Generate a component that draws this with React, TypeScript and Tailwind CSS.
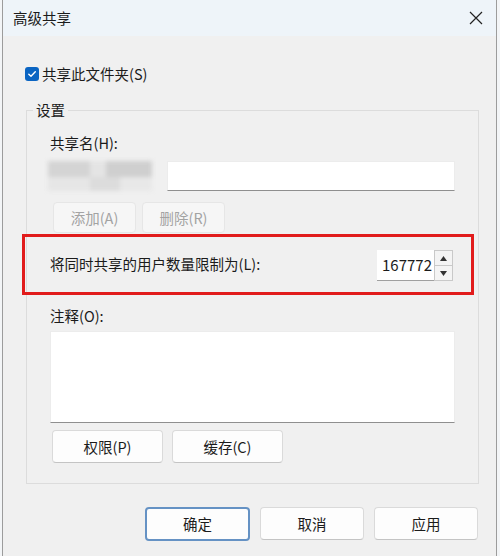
import React from 'react'

const font = { fontFamily: '"Noto Sans CJK SC", "Noto Sans", sans-serif' }

function Btn({ label, w, disabled, primary }: { label: string; w: string; disabled?: boolean; primary?: boolean }) {
  if (disabled) {
    return (
      <div className={`${w} h-[31px] flex items-center justify-center rounded-[4px] border border-[#e6e6e6] bg-[#f6f6f6] text-[#a3a3a3]`}>
        {label}
      </div>
    )
  }
  if (primary) {
    return (
      <div className={`${w} h-[34px] flex items-center justify-center rounded-[4px] border-2 border-[#6592c4] bg-[#fdfdfd] text-[#1b1b1b]`}>
        {label}
      </div>
    )
  }
  return (
    <div className={`${w} h-[33px] flex items-center justify-center rounded-[4px] border border-[#dadada] border-b-[#c4c4c4] bg-[#fdfdfd] text-[#1b1b1b]`}>
      {label}
    </div>
  )
}

function Blurred() {
  return (
    <div className="w-[104px] h-[30px] flex flex-col blur-[2px]">
      <div className="flex h-[16px]">
        <div className="w-[42px] bg-[#d4d4d4]" />
        <div className="w-[16px] bg-[#e4e4e4]" />
        <div className="w-[46px] bg-[#cfcfcf]" />
      </div>
      <div className="flex h-[14px]">
        <div className="w-[42px] bg-[#e6e6e6]" />
        <div className="w-[30px] bg-[#dcdcdc]" />
        <div className="w-[32px] bg-[#e8e8e8]" />
      </div>
    </div>
  )
}

export default function App() {
  return (
    <div className="w-[500px] h-[556px] bg-[#f3f5f7] overflow-hidden text-[14.5px] text-[#1b1b1b]" style={font}>
      <div className="ml-[2px] w-[495px] h-[556px] border-x border-[#9c9c9c] bg-[#f0f0f0] flex flex-col">
        {/* title bar */}
        <div className="h-[36px] bg-[#eef4f9] flex items-center justify-between pl-[10px] pr-[12px]">
          <span className="text-[14.5px]">高级共享</span>
          <svg width="14" height="14" viewBox="0 0 14 14" className="mr-[1px]">
            <path d="M1 1 L13 13 M13 1 L1 13" stroke="#222" strokeWidth="1.2" fill="none" />
          </svg>
        </div>

        <div className="flex flex-col items-start pl-[22px]">
          {/* share checkbox */}
          <div className="flex items-center gap-[3px] mt-[30px] h-[16px]">
            <div className="w-[14px] h-[14px] rounded-[3px] bg-[#0a64c2] flex items-center justify-center">
              <svg width="10" height="10" viewBox="0 0 10 10">
                <path d="M1.8 5.2 L4 7.3 L8.3 2.8" stroke="#fff" strokeWidth="1.4" fill="none" strokeLinecap="round" strokeLinejoin="round" />
              </svg>
            </div>
            <span>共享此文件夹(S)</span>
          </div>

          {/* settings group */}
          <div className="relative mt-[28px] ml-[1px] w-[453px] border border-[#dcdcdc] pl-[23px] pr-[23px] pb-[20px]">
            <span className="absolute -top-[11px] left-[6px] px-[3px] leading-[20px] bg-[#f0f0f0]">设置</span>

            <div className="mt-[22px] leading-[20px]">共享名(H):</div>

            <div className="mt-[8px] flex items-center">
              <div className="-ml-[2px]">
                <Blurred />
              </div>
              <div className="ml-[15px] w-[288px] h-[30px] bg-white border border-[#ececec] border-b-[#8f8f8f]" />
            </div>

            <div className="mt-[11px] flex gap-[6px] ml-[3px]">
              <Btn label="添加(A)" w="w-[83px]" disabled />
              <Btn label="删除(R)" w="w-[83px]" disabled />
            </div>

            {/* highlighted user limit row */}
            <div className="mt-[1px] -ml-[28px] w-[452px] h-[61px] border-[3px] border-[#e11b1b] flex items-center justify-between pl-[25px] pr-[18px]">
              <span className="mt-[-2px]">将同时共享的用户数量限制为(L):</span>
              <div className="flex items-stretch h-[31px] mt-[2px]">
                <div className="w-[57px] bg-white border-b border-[#a0a0a0] flex items-center justify-end pr-[2px] text-[15px]">167772</div>
                <div className="w-[19px] flex flex-col border border-[#c9c9c9] bg-[#ececec]">
                  <div className="flex-1 flex items-center justify-center border-b border-[#c9c9c9] bg-[#f4f4f4]">
                    <svg width="7" height="5" viewBox="0 0 7 5"><path d="M0 5 L3.5 0 L7 5 Z" fill="#333" /></svg>
                  </div>
                  <div className="flex-1 flex items-center justify-center bg-[#f4f4f4]">
                    <svg width="7" height="5" viewBox="0 0 7 5"><path d="M0 0 L3.5 5 L7 0 Z" fill="#333" /></svg>
                  </div>
                </div>
              </div>
            </div>

            <div className="mt-[11px] leading-[20px]">注释(O):</div>
            <div className="mt-[5px] w-[405px] h-[92px] bg-white border border-[#ececec] border-b-[#8f8f8f]" />

            <div className="mt-[7px] flex gap-[9px] ml-[2px]">
              <Btn label="权限(P)" w="w-[111px]" />
              <Btn label="缓存(C)" w="w-[111px]" />
            </div>
          </div>
        </div>

        {/* dialog buttons */}
        <div className="mt-[23px] flex justify-end gap-[10px] pr-[18px]">
          <Btn label="确定" w="w-[105px]" primary />
          <Btn label="取消" w="w-[104px]" />
          <Btn label="应用" w="w-[104px]" />
        </div>
      </div>
    </div>
  )
}
